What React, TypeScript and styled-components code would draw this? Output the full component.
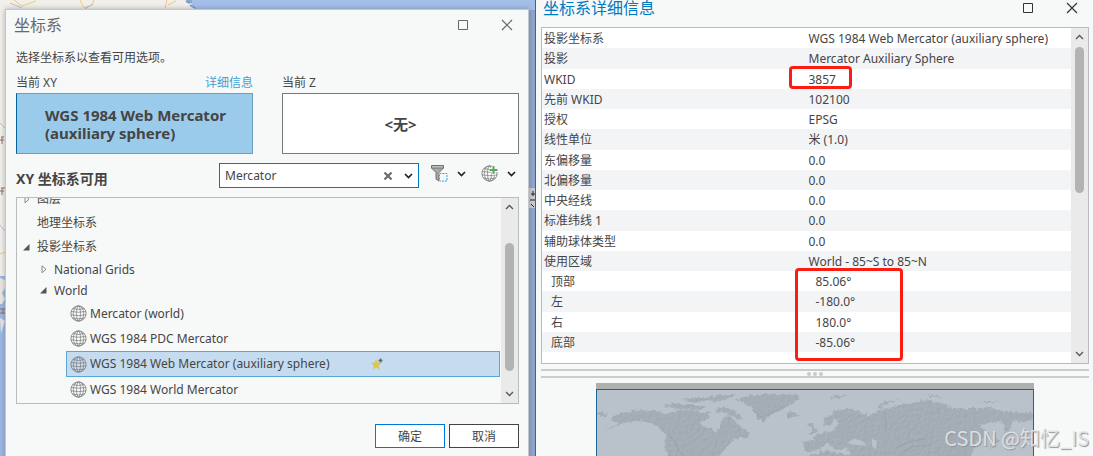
import React from "react";
import styled, { createGlobalStyle, css } from "styled-components";

const BLUE = "#0079c1";
const INK = "#454545";

const GlobalStyle = createGlobalStyle`
  *, *::before, *::after { box-sizing: border-box; }
  body {
    margin: 0;
    color: ${INK};
    font: 12px/16px "Noto Sans", "Noto Sans CJK SC", sans-serif;
  }
  button, input { font: inherit; color: inherit; }
  button { padding: 0; }
`;

const Desktop = styled.main`
  position: relative;
  display: grid;
  grid-template-columns: minmax(0, 535fr) minmax(0, 558fr);
  height: 100vh;
  overflow: hidden;
`;

/* ---------- left: map window with the picker dialog ---------- */

const MapArea = styled.section`
  position: relative;
  padding: 9px 6px 0 5px;
  background: #8fa6cc;
`;

const MapBackdrop = styled.svg`
  position: absolute;
  inset: 0;
  width: 100%;
  height: 100%;
`;

const Dialog = styled.div`
  position: relative;
  height: 100%;
  padding: 5px 9px 0 10px;
  background: #f7f9f9;
  border: solid #c4c8cb;
  border-width: 1px 1px 0;
  box-shadow: 0 0 5px rgba(40, 50, 70, 0.35);
`;

const TitleBar = styled.header<{ $compact?: boolean }>`
  display: flex;
  align-items: center;
  justify-content: space-between;
  height: ${(p) => (p.$compact ? 16 : 20)}px;
  padding-right: ${(p) => (p.$compact ? 11 : 6)}px;
`;

const Title = styled.h1<{ $active?: boolean }>`
  margin: 0 0 0 ${(p) => (p.$active ? 2 : -2)}px;
  font-size: 16px;
  line-height: 20px;
  font-weight: 400;
  color: ${(p) => (p.$active ? BLUE : "#6a6a6a")};
`;

const WindowButtons = styled.div<{ $active?: boolean }>`
  display: flex;
  gap: 32px;
  color: ${(p) => (p.$active ? "#333" : "#666")};
`;

const IconButton = styled.button`
  display: flex;
  align-items: center;
  justify-content: center;
  border: 0;
  background: none;
`;

const Hint = styled.p`
  margin: 15px 0 9px;
`;

const Pair = styled.div`
  display: grid;
  grid-template-columns: 1fr 1fr;
  column-gap: 29px;
`;

const FieldHead = styled.div`
  display: flex;
  justify-content: space-between;
  height: 18px;
`;

const DetailLink = styled.a`
  color: #3f9fd6;
  text-decoration: none;
`;

const SystemButton = styled.button<{ $selected?: boolean }>`
  width: 100%;
  height: 61px;
  font-size: 15px;
  line-height: 18px;
  font-weight: 700;
  background: #fff;
  border: 1px solid #77797b;
  ${(p) =>
    p.$selected &&
    css`
      padding: 0 24px 0 28px;
      text-align: left;
      background: #9bcbeb;
      border-color: #6a9fc0;
      border-left-color: #00619b;
    `}
`;

const Toolbar = styled.div`
  display: flex;
  align-items: center;
  height: 25px;
  margin: 9px 0;
`;

const Heading = styled.h2`
  flex: 1;
  margin: 6px 0 0;
  font-size: 14px;
  line-height: 18px;
  font-weight: 700;
`;

const SearchBox = styled.div`
  display: flex;
  align-items: center;
  gap: 12px;
  width: 200px;
  height: 25px;
  padding: 0 5px;
  background: #fff;
  border: 1px solid ${BLUE};
`;

const SearchInput = styled.input`
  flex: 1;
  min-width: 0;
  padding: 0;
  border: 0;
  outline: 0;
  background: none;
`;

const ToolGroup = styled.div`
  display: flex;
  align-items: center;
  gap: 9px;
  margin: 0 3px 4px 12px;
`;

const ListFrame = styled.div`
  display: flex;
  height: 207px;
  border: 1px solid #b9bcbe;
  overflow: hidden;
`;

const Tree = styled.ul`
  flex: 1;
  margin: -11px 0 0;
  padding: 0 1px 0 0;
  list-style: none;
`;

const indent = [4, 21, 49];

const TreeRow = styled.li<{ $level: number; $height: number; $selected?: boolean }>`
  display: flex;
  align-items: center;
  height: ${(p) => p.$height}px;
  margin-left: ${(p) => indent[p.$level]}px;
  padding-left: ${(p) => (p.$level === 2 ? 3 : 0)}px;
  gap: ${(p) => (p.$level === 2 ? 3 : 6)}px;
  border: 1px solid transparent;
  white-space: nowrap;
  ${(p) =>
    p.$selected &&
    css`
      background: #c5dbef;
      border-color: #5ba7d3;
    `}
`;

const Expander = styled.svg`
  width: 9px;
  height: 9px;
  flex: none;
`;

const Favorite = styled.svg`
  width: 12px;
  height: 12px;
  margin-left: 38px;
`;

const ScrollTrack = styled.div`
  display: flex;
  flex-direction: column;
  align-items: center;
  flex: none;
  width: 17px;
  padding: 6px 0;
  color: #555;
  background: #eaeaea;
`;

const ScrollThumb = styled.div<{ $before: number; $size: number }>`
  width: 9px;
  height: ${(p) => p.$size}px;
  margin: ${(p) => p.$before}px 0 auto;
  border-radius: 5px;
  background: #b3b3b3;
`;

const DialogActions = styled.footer`
  display: flex;
  justify-content: flex-end;
  gap: 4px;
  margin-top: 20px;
`;

const ActionButton = styled.button<{ $primary?: boolean }>`
  width: 70px;
  height: 24px;
  padding-top: 1px;
  background: #fff;
  border: 1px solid ${(p) => (p.$primary ? "#0078d7" : "#444")};
`;

const Grip = styled.svg`
  position: absolute;
  right: 3px;
  bottom: 1px;
  width: 11px;
  height: 11px;
  fill: #85878f;
`;

/* ---------- right: details window ---------- */

const DetailsWindow = styled.section`
  padding: 0 4px 0 5px;
  background: #f7f9f9;
  border-left: 1px solid ${BLUE};
`;

const DetailsFrame = styled.div`
  position: relative;
  display: flex;
  height: 337px;
  margin-top: 11px;
  background: #fff;
  border: 1px solid #b9bcbe;
`;

const TableArea = styled.div`
  flex: 1;
`;

const DetailsTable = styled.table`
  width: 100%;
  height: 324px;
  table-layout: fixed;
  border-collapse: collapse;
`;

const DetailsRow = styled.tr`
  &:nth-child(even) {
    background: #f3f4f6;
  }
`;

const cell = css<{ $nested?: boolean }>`
  position: relative;
  width: 50%;
  padding: 2px 0 0 ${(p) => (p.$nested ? 9 : 2)}px;
  line-height: 18px;
  font-weight: 400;
  text-align: left;
  white-space: nowrap;
`;
const NameCell = styled.th<{ $nested?: boolean }>`
  ${cell}
`;
const ValueCell = styled.td<{ $nested?: boolean }>`
  ${cell}
`;

const Mark = styled.span<{ $width: number; $height: number }>`
  position: absolute;
  top: -3px;
  left: ${(p) => (p.$height > 30 ? -12 : -18)}px;
  width: ${(p) => p.$width}px;
  height: ${(p) => p.$height}px;
  border: 3px solid #fd1c12;
  border-radius: 4px;
  z-index: 1;
`;

const Splitter = styled.div`
  display: flex;
  align-items: center;
  justify-content: center;
  gap: 2px;
  height: 9px;
  margin: 5px 0;
  border: solid #c9cbcc;
  border-width: 2px 0;
`;

const Dot = styled.i`
  width: 4px;
  height: 4px;
  border-radius: 2px;
  background: #c9cbcc;
`;

const Preview = styled.div`
  width: 80%;
  margin: 0 auto;
  border-top: 6px solid #aeafb1;
`;

const WorldSvg = styled.svg`
  display: block;
  width: 100%;
  border: 1px solid #1b6698;
  background: #b9c1ca;
`;

const Watermark = styled.div`
  position: absolute;
  right: 4px;
  bottom: 5px;
  font: 20px/26px "Noto Sans CJK SC", sans-serif;
  color: rgba(228, 231, 233, 0.9);
  text-shadow: 1px 1px 1px #909498;
  white-space: nowrap;
`;

/* ---------- icons ---------- */

const Chevron = ({ up, thin }: { up?: boolean; thin?: boolean }) => (
  <svg width="9" height="6" viewBox="0 0 9 6" fill="none" stroke={thin ? "#555" : "#222"} strokeWidth={thin ? 1.3 : 1.7}>
    <path d={up ? "M1 5 4.5 1.5 8 5" : "M1 1 4.5 4.5 8 1"} />
  </svg>
);

const Globe = ({ plus }: { plus?: boolean }) => (
  <svg width="17" height="17" viewBox="0 0 17 17" fill="none" stroke="#858585" strokeWidth="0.8">
    <circle cx="8.500" cy="8.500" r="7.600" strokeWidth="1" />
    <ellipse cx="8.500" cy="8.500" rx="5.200" ry="7.600" />
    <ellipse cx="8.500" cy="8.500" rx="2" ry="7.600" />
    <path d="M3 3.500Q8.500 5.500 14 3.500M1.300 6.500Q8.500 8 15.700 6.500M1 9.800Q8.500 11.500 16 9.800M2.500 13Q8.500 14.600 14.500 13" />
    {plus && (
      <>
        <path d="M8 5h9M12.500 1v9" stroke="#f7f9f9" strokeWidth="4" />
        <path d="M8.500 5h8M12.500 1v8" stroke="#5aa85c" strokeWidth="2" />
      </>
    )}
  </svg>
);

const Funnel = () => (
  <svg width="17" height="17" viewBox="0 0 17 17" fill="none">
    <path d="M.5.5h12v2.500l-4.500 4.500v8.500l-3-2V7.500L.5 3z" fill="#a9a9a9" stroke="#6f6f6f" />
    <path d="M1 1.500h11v1.500H1z" fill="#d4d4d4" />
    <path d="M.5 3h12" stroke="#6f6f6f" />
    <path d="M8 8h9v9H8z" fill="#f7f9f9" />
    <path d="M8.500 8.500h7.500v7.500H8.500z" stroke="#3a9bdc" strokeDasharray="2 1" />
  </svg>
);

const WindowControls = ({ active }: { active?: boolean }) => (
  <WindowButtons $active={active}>
    <IconButton aria-label="最大化">
      <svg width="12" height="12" fill="none" stroke="currentColor">
        <path d="M1.500 1.500h9v9h-9z" />
      </svg>
    </IconButton>
    <IconButton aria-label="关闭">
      <svg width="12" height="12" fill="none" stroke="currentColor">
        <path d="M1 1l10 10M11 1L1 11" strokeWidth="1.200" />
      </svg>
    </IconButton>
  </WindowButtons>
);

const Scrollbar = ({ before, size }: { before: number; size: number }) => (
  <ScrollTrack>
    <Chevron up thin />
    <ScrollThumb $before={before} $size={size} />
    <Chevron thin />
  </ScrollTrack>
);

const WorldMap = () => (
  <WorldSvg viewBox="0 0 438 219" role="img" aria-label="World">
    <defs>
      <filter id="relief" x="0" y="0" width="100%" height="100%" colorInterpolationFilters="sRGB">
        <feTurbulence type="fractalNoise" baseFrequency="0.3" numOctaves="2" seed="8" result="noise" />
        <feDisplacementMap in="SourceGraphic" in2="noise" scale="6" xChannelSelector="R" yChannelSelector="G" result="coast" />
        <feDiffuseLighting in="noise" surfaceScale="0.6" lightingColor="#ccd5de" result="light">
          <feDistantLight azimuth="225" elevation="52" />
        </feDiffuseLighting>
        <feComposite in="light" in2="coast" operator="in" result="shade" />
        <feComposite in="coast" in2="shade" operator="arithmetic" k2="0.82" k3="0.18" />
      </filter>
    </defs>
    <g filter="url(#relief)" fill="#a5aeb7">
      <path d="M0 0h438v219H0z" fill="none" />
      <path d="M14 30 21 24 39 20 56 21 72 24 82 20 96 20 106 23 113 21 112 28 104 32 107 37 114 38 119 42 124 38 123 31 131 25 139 31 146 39 154 42 151 47 139 49 131 56 121 68 116 90 100 96 84 92 72 67 67 54 69 44 56 34 42 30 27 33 5 41 22 33zM0 22 12 23 8 27 0 25z" />
      <path d="M66 16 76 13 90 15 108 16 103 20 82 19zM84 10 109 7 114 10 98 13zM119 18 131 17 143 24 145 30 137 28 130 22 120 23zM109 7 136 4 140 6 126 10 116 12 112 10z" />
      <path d="M138 9 156 5 174 4 202 5 203 10 194 15 188 19 179 22 172 27 166 32 160 27 157 20 150 14z" />
      <path d="M190 24 195 22 203 24 199 28 192 28zM214 32 218 34 221 43 213 44 216 39 212 36z" />
      <path d="M227 35 229 28 240 21 253 18 264 22 274 26 284 20 304 15 330 10 348 14 360 19 377 19 394 18 410 22 438 23 438 30 425 32 417 31 414 41 408 44 409 34 400 31 384 36 393 45 381 52 374 70 350 95 320 90 300 76 280 83 260 73 251 58 241 61 231 54 223 60 208 62 207 51 217 51 219 45 232 42 239 40 242 34 239 29 234 36z" />
      <path d="M206 68 230 61 263 67 276 88 259 120 239 130 231 95 207 88zM108 99 145 115 157 134 135 176 125 184 119 140zM356 135 390 122 402 146 383 158 356 150z" />
      <path d="M233 7 251 5 243 9zM281 17 290 11 306 9 291 13 284 18zM330 4 347 7 341 8zM382 11 405 11 393 13zM397 42 403 52 394 60 398 51z" />
    </g>
    <path d="M251 53 258 49 266 51 271 56 257 55zM276 49 281 51 280 60 276 56z" fill="#b9c1ca" />
    <path d="M72 45l7 8 3 8 6 7M300 58l14-6 16-3M304 64l12-7 20-2M289 22l1 18M156 20l8 7 10-3 14-8" fill="none" stroke="#929ca6" opacity="0.7" />
  </WorldSvg>
);

/* ---------- content ---------- */

type Node = { label: string; level: number; height: number; open?: boolean; leaf?: boolean; selected?: boolean; bare?: boolean };

const nodes: Node[] = [
  { label: "图层", level: 0, height: 24 },
  { label: "地理坐标系", level: 0, height: 24, bare: true },
  { label: "投影坐标系", level: 0, height: 24, open: true },
  { label: "National Grids", level: 1, height: 21 },
  { label: "World", level: 1, height: 21, open: true },
  { label: "Mercator (world)", level: 2, height: 25, leaf: true },
  { label: "WGS 1984 PDC Mercator", level: 2, height: 25, leaf: true },
  { label: "WGS 1984 Web Mercator (auxiliary sphere)", level: 2, height: 26, leaf: true, selected: true },
  { label: "WGS 1984 World Mercator", level: 2, height: 25, leaf: true },
];

const details: { name: string; value: string; nested?: boolean; mark?: [number, number] }[] = [
  { name: "投影坐标系", value: "WGS 1984 Web Mercator (auxiliary sphere)" },
  { name: "投影", value: "Mercator Auxiliary Sphere" },
  { name: "WKID", value: "3857", mark: [63, 23] },
  { name: "先前 WKID", value: "102100" },
  { name: "授权", value: "EPSG" },
  { name: "线性单位", value: "米 (1.0)" },
  { name: "东偏移量", value: "0.0" },
  { name: "北偏移量", value: "0.0" },
  { name: "中央经线", value: "0.0" },
  { name: "标准纬线 1", value: "0.0" },
  { name: "辅助球体类型", value: "0.0" },
  { name: "使用区域", value: "World - 85~S to 85~N" },
  { name: "顶部", value: "85.06°", nested: true, mark: [108, 93] },
  { name: "左", value: "-180.0°", nested: true },
  { name: "右", value: "180.0°", nested: true },
  { name: "底部", value: "-85.06°", nested: true },
];

const TreeItem = ({ node }: { node: Node }) => (
  <TreeRow
    role="treeitem"
    aria-level={node.level + 1}
    aria-selected={!!node.selected}
    $level={node.level}
    $height={node.height}
    $selected={node.selected}
  >
    {node.leaf ? (
      <Globe />
    ) : (
      <Expander viewBox="0 0 9 9">
        {node.bare ? null : node.open ? (
          <path d="M7.500 1v6.500H1z" fill="#555" />
        ) : (
          <path d="M3 .8v7L7 4.300z" fill="none" stroke="#888" />
        )}
      </Expander>
    )}
    <span>{node.label}</span>
    {node.selected && (
      <Favorite viewBox="0 0 12 12">
        <path d="M5 1 6.600 4.500l4 .3-3 2.700 1 4L5 9.300 1.800 11.500l1-4L0 4.800l3.700-.3z" fill="#d9c64a" />
        <path d="M7.500 2.500h4M9.500.5v4" stroke="#5c6878" strokeWidth="1.600" />
      </Favorite>
    )}
  </TreeRow>
);

export default function App() {
  return (
    <>
      <GlobalStyle />
      <Desktop>
        <MapArea>
          <MapBackdrop aria-hidden="true">
            <path d="M0 0h186l6 4 4 6H5v270l-5 3z" fill="#f1efe9" />
            <path d="M192 0h343v10H198l-6-5z" fill="#a3bfe8" />
            <path d="M0 276h6v180H0z" fill="#9db8e2" />
            <path d="M0 278l5 2v8l-3 5 3 6-3 5H0zM0 318l5 3-4 12z" fill="#e9e6dc" />
            <path d="M14 0l8 6 14-5M80 0l4 8 8-3 2-5M165 8l2-8M168 5l8-4M0 254l5-2" fill="none" stroke="#f0c877" />
            <path d="M10 3l12 5M85 9l8-5M0 123l5 5M0 225l5 6" fill="none" stroke="#c3b9dc" />
            <path d="M1 137h3M0 140h4M2 137v7M1 188h4M0 191h4M2 188v7M0 309h5M0 313h5M3 309v5" stroke="#94705a" />
            <path d="M186 1l4 2M190 5l5 3" stroke="#7e9ac8" strokeWidth="2" />
            <path d="M529 188h6v20h-6z" fill="#c9ccd2" />
            <path d="M531 194h4M533 191v5M530 200h5M531 204l3 3" stroke="#222" />
          </MapBackdrop>
          <Dialog role="dialog" aria-label="坐标系">
            <TitleBar>
              <Title>坐标系</Title>
              <WindowControls />
            </TitleBar>
            <Hint>选择坐标系以查看可用选项。</Hint>
            <Pair>
              <div>
                <FieldHead>
                  <span>当前 XY</span>
                  <DetailLink href="#details">详细信息</DetailLink>
                </FieldHead>
                <SystemButton $selected>WGS 1984 Web Mercator (auxiliary sphere)</SystemButton>
              </div>
              <div>
                <FieldHead>当前 Z</FieldHead>
                <SystemButton>&lt;无&gt;</SystemButton>
              </div>
            </Pair>
            <Toolbar>
              <Heading>XY 坐标系可用</Heading>
              <SearchBox>
                <SearchInput aria-label="搜索" defaultValue="Mercator" />
                <IconButton aria-label="清除">
                  <svg width="8" height="8" stroke="#666" strokeWidth="2">
                    <path d="M.5.5l7 7M7.500.5l-7 7" />
                  </svg>
                </IconButton>
                <IconButton aria-label="搜索历史">
                  <Chevron />
                </IconButton>
              </SearchBox>
              <ToolGroup>
                <IconButton aria-label="过滤器">
                  <Funnel />
                </IconButton>
                <IconButton aria-label="过滤器选项">
                  <Chevron />
                </IconButton>
              </ToolGroup>
              <ToolGroup>
                <IconButton aria-label="添加坐标系">
                  <Globe plus />
                </IconButton>
                <IconButton aria-label="添加选项">
                  <Chevron />
                </IconButton>
              </ToolGroup>
            </Toolbar>
            <ListFrame>
              <Tree role="tree">
                {nodes.map((n) => (
                  <TreeItem key={n.label} node={n} />
                ))}
              </Tree>
              <Scrollbar before={33} size={128} />
            </ListFrame>
            <DialogActions>
              <ActionButton $primary>确定</ActionButton>
              <ActionButton>取消</ActionButton>
            </DialogActions>
            <Grip viewBox="0 0 11 11">
              <path d="M8 0h2v2H8zM4 4h2v2H4zM8 4h2v2H8zM0 8h2v2H0zM4 8h2v2H4zM8 8h2v2H8z" />
            </Grip>
          </Dialog>
        </MapArea>
        <DetailsWindow id="details">
          <TitleBar $compact>
            <Title $active>坐标系详细信息</Title>
            <WindowControls active />
          </TitleBar>
          <DetailsFrame>
            <TableArea>
              <DetailsTable>
                <tbody>
                  {details.map((d) => (
                    <DetailsRow key={d.name}>
                      <NameCell scope="row" $nested={d.nested}>
                        {d.name}
                      </NameCell>
                      <ValueCell $nested={d.nested}>
                        {d.value}
                        {d.mark && <Mark $width={d.mark[0]} $height={d.mark[1]} />}
                      </ValueCell>
                    </DetailsRow>
                  ))}
                </tbody>
              </DetailsTable>
            </TableArea>
            <Scrollbar before={7} size={146} />
          </DetailsFrame>
          <Splitter>
            <Dot />
            <Dot />
            <Dot />
          </Splitter>
          <Preview>
            <WorldMap />
          </Preview>
        </DetailsWindow>
        <Watermark>CSDN @知忆_IS</Watermark>
      </Desktop>
    </>
  );
}
